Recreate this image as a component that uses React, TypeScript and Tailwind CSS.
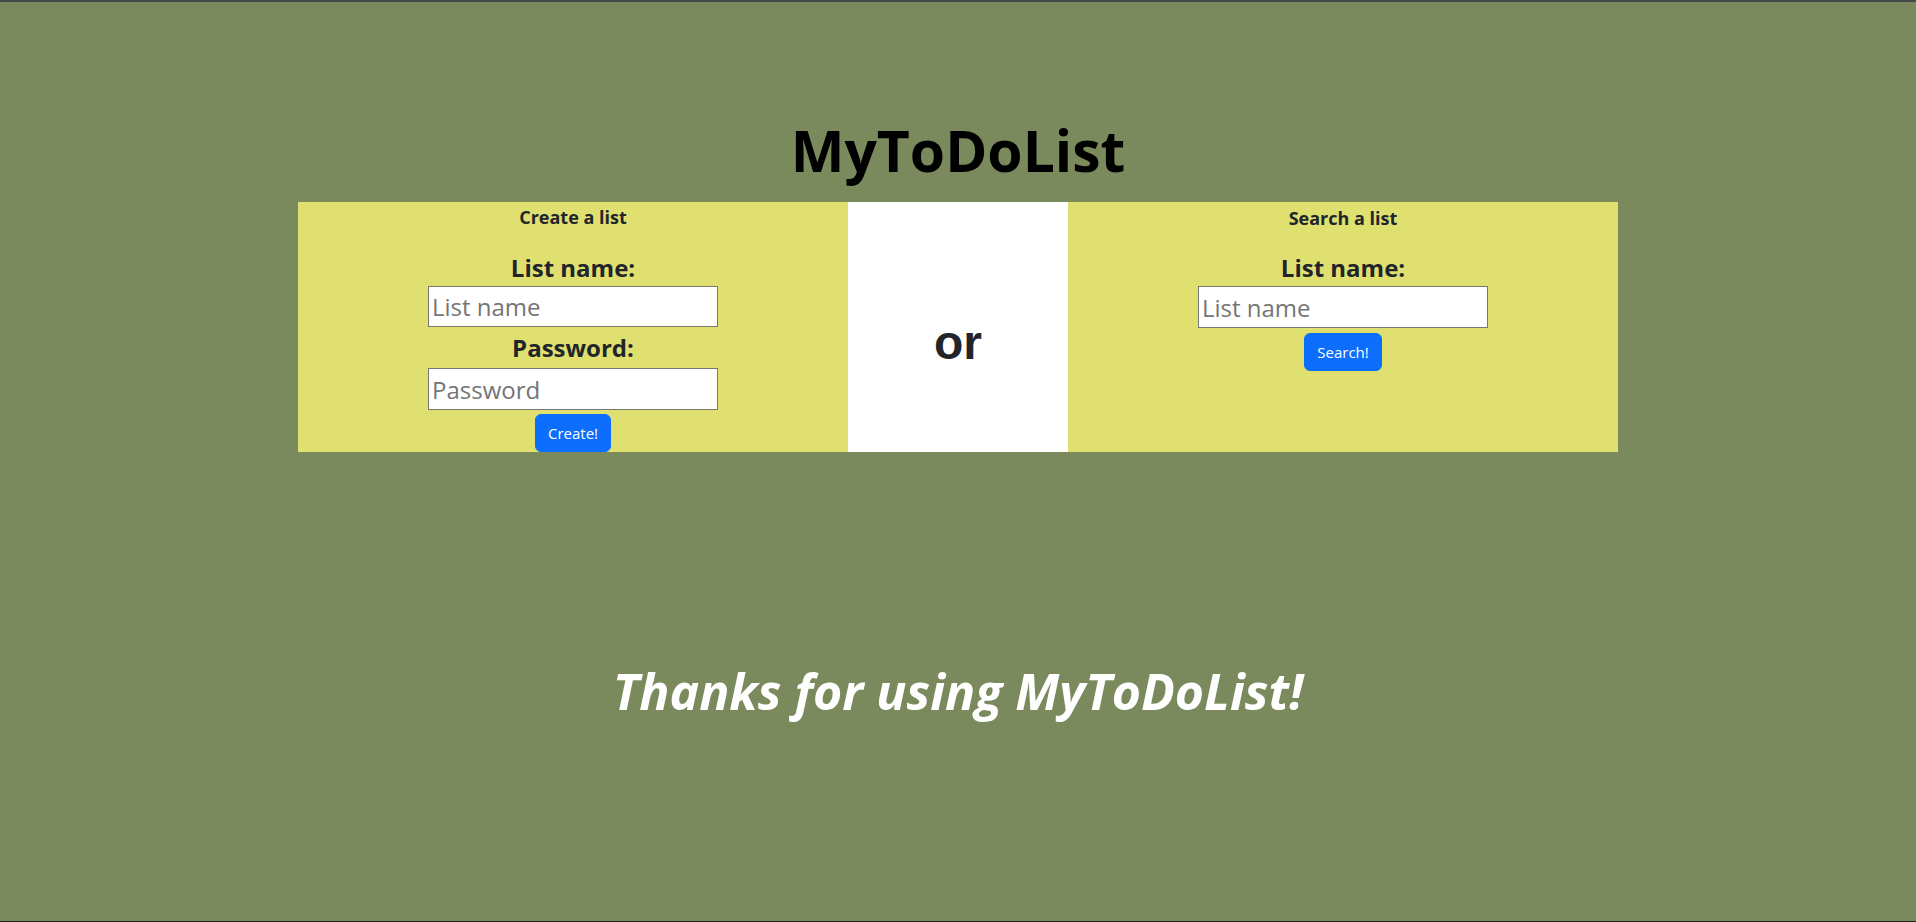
const sans = "font-['Open_Sans','Noto_Sans',sans-serif]";

function Field({ label, placeholder, type = "text" }: { label: string; placeholder: string; type?: string }) {
  return (
    <>
      <label className="flex h-[36px] items-center text-[24px] font-bold text-[#212529]">{label}</label>
      <input
        type={type}
        placeholder={placeholder}
        className="h-[42px] w-[290px] border border-[#767676] bg-white pl-[3px] text-[24px] text-[#212529] outline-none placeholder:text-[#757575]"
      />
    </>
  );
}

function SubmitButton({ children }: { children: string }) {
  return (
    <button className="h-[38px] rounded-[6px] border border-[#0d6efd] bg-[#0d6efd] px-3 text-[15px] text-white">
      {children}
    </button>
  );
}

export default function App() {
  return (
    <div className={`${sans} flex min-h-screen flex-col border-t-2 border-b border-t-[#45484a] border-b-[#1e1e1e] bg-[#7b8a5c]`}>
      <h1 className="mb-[18px] pt-[114px] text-center text-[57px] font-bold leading-[68px] text-black">MyToDoList</h1>

      <div className="mx-auto flex h-[250px] w-[1320px]">
        <section className="flex w-[550px] flex-col items-center bg-[#e0e071]">
          <h5 className="flex h-[32px] items-center text-[18px] font-bold text-[#212529]">Create a list</h5>
          <div className="h-[16px]" />
          <Field label="List name:" placeholder="List name" />
          <label className="flex h-[41px] items-center text-[24px] font-bold text-[#212529]">Password:</label>
          <input
            type="password"
            placeholder="Password"
            className="h-[42px] w-[290px] border border-[#767676] bg-white pl-[3px] text-[24px] text-[#212529] outline-none placeholder:text-[#757575]"
          />
          <div className="mt-[4px]">
            <SubmitButton>Create!</SubmitButton>
          </div>
        </section>

        <section className="w-[220px] bg-white pt-[112px] text-center">
          <h2 className="font-['Liberation_Sans',Arial,sans-serif] text-[48px] font-bold leading-[1.2] text-[#212529]">or</h2>
        </section>

        <section className="flex w-[550px] flex-col items-center bg-[#e0e071]">
          <h5 className="flex h-[32px] items-center text-[18px] font-bold text-[#212529]">Search a list</h5>
          <div className="h-[16px]" />
          <Field label="List name:" placeholder="List name" />
          <div className="mt-[5px]">
            <SubmitButton>Search!</SubmitButton>
          </div>
        </section>
      </div>

      <p className="pt-[209px] text-center text-[50px] font-bold italic leading-[60px] text-white">
        Thanks for using MyToDoList!
      </p>
    </div>
  );
}
